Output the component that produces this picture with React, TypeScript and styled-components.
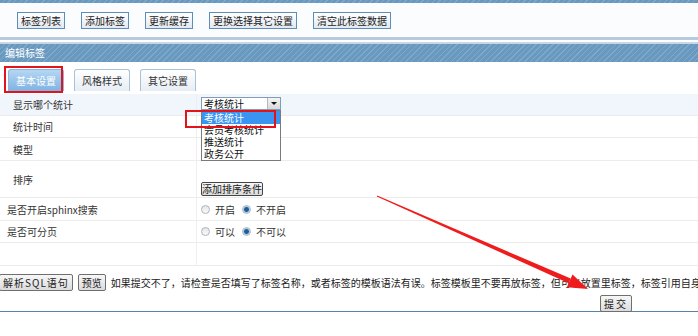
import styled, { createGlobalStyle } from 'styled-components';

const GlobalStyle = createGlobalStyle`
  html, body {
    margin: 0;
    padding: 0;
    background: #fff;
  }
  body {
    font-family: "Noto Sans CJK SC", "Liberation Sans", sans-serif;
    font-size: 10px;
    color: #333;
  }
`;

const stripes = `repeating-linear-gradient(135deg, #6a99c0 0px, #6a99c0 3px, #7ea9cc 3px, #7ea9cc 4px)`;

const Page = styled.div`
  position: relative;
  width: 698px;
  height: 336px;
  overflow: hidden;
  background: #fff;
`;

const TopStripe = styled.div`
  height: 3px;
  background: ${stripes};
`;

const Toolbar = styled.div`
  height: 34px;
  display: flex;
  align-items: flex-start;
  gap: 16px;
  padding: 9px 0 0 17px;
  box-sizing: border-box;
  background: #fafcfe;
`;

const ToolButton = styled.button`
  height: 17px;
  padding: 0 3px;
  border: 1px solid #5f8db8;
  background: linear-gradient(#ffffff, #e3e9f1);
  font-family: inherit;
  font-size: 10px;
  line-height: 15px;
  color: #222;
  cursor: pointer;
`;

const RuleTop = styled.div`
  height: 3px;
  background: #b6cade;
`;

const RuleGap = styled.div`
  height: 2px;
  background: #fff;
  border-bottom: 2px solid #c7d7e7;
`;

const SectionHeader = styled.div`
  height: 18px;
  line-height: 18px;
  padding-left: 5px;
  color: #fff;
  background: ${stripes};
`;

const TabBar = styled.div`
  position: relative;
  display: flex;
  gap: 10px;
  height: 32px;
  padding: 7px 0 0 8px;
  box-sizing: border-box;
`;

const Tab = styled.div<{ $active?: boolean }>`
  height: 22px;
  padding: 0 7px;
  line-height: 22px;
  border: 1px solid ${(p) => (p.$active ? '#8db6dc' : '#aac2d8')};
  border-bottom: none;
  border-radius: 3px 3px 0 0;
  box-sizing: border-box;
  color: ${(p) => (p.$active ? '#fff' : '#333')};
  background: ${(p) =>
    p.$active
      ? 'linear-gradient(#b5d6f3, #7fb3e2)'
      : 'linear-gradient(#ffffff, #e6edf4)'};
`;

const RedBox = styled.div<{ $x: number; $y: number; $w: number; $h: number }>`
  position: absolute;
  left: ${(p) => p.$x}px;
  top: ${(p) => p.$y}px;
  width: ${(p) => p.$w}px;
  height: ${(p) => p.$h}px;
  border: 2px solid #e3131b;
  box-sizing: border-box;
  pointer-events: none;
  z-index: 5;
`;

const Table = styled.div`
  display: grid;
  grid-template-columns: 197px 1fr;
`;

const Label = styled.div<{ $h: number; $indent: number; $hl?: boolean }>`
  height: ${(p) => p.$h}px;
  padding-left: ${(p) => p.$indent}px;
  display: flex;
  align-items: center;
  border-bottom: 1px solid #ececec;
  border-right: 1px solid #eeeeee;
  box-sizing: border-box;
  background: ${(p) => (p.$hl ? '#f0f6fb' : '#fff')};
`;

const Value = styled.div<{ $h: number; $hl?: boolean; $align?: string }>`
  position: relative;
  height: ${(p) => p.$h}px;
  padding-left: 4px;
  display: flex;
  align-items: ${(p) => p.$align || 'center'};
  gap: 5px;
  border-bottom: 1px solid #ececec;
  box-sizing: border-box;
  background: ${(p) => (p.$hl ? '#f0f6fb' : '#fff')};
`;

const SelectWrap = styled.div`
  position: relative;
  margin-top: 3px;
  width: 80px;
`;

const SelectBox = styled.div`
  height: 13px;
  border: 1px solid #7f9db9;
  background: #fff;
  box-sizing: border-box;
  display: flex;
  align-items: center;
  justify-content: space-between;
  padding-left: 2px;
  line-height: 11px;
  color: #111;
`;

const SelectArrow = styled.span`
  width: 12px;
  height: 11px;
  background: linear-gradient(#f4f4f4, #d8d8d8);
  border-left: 1px solid #b8b8b8;
  display: flex;
  align-items: center;
  justify-content: center;
  &::after {
    content: '';
    border-left: 3px solid transparent;
    border-right: 3px solid transparent;
    border-top: 3px solid #111;
  }
`;

const OptionList = styled.div`
  position: absolute;
  top: 13px;
  left: 0;
  width: 80px;
  border: 1px solid #7a7a7a;
  background: #fff;
  box-sizing: border-box;
  z-index: 4;
`;

const Option = styled.div<{ $sel?: boolean }>`
  height: ${(p) => (p.$sel ? 13 : 12)}px;
  line-height: ${(p) => (p.$sel ? 13 : 12)}px;
  padding-left: 2px;
  background: ${(p) => (p.$sel ? '#3a95f2' : '#fff')};
  color: ${(p) => (p.$sel ? '#fff' : '#111')};
  white-space: nowrap;
`;

const PlainButton = styled.button<{ $spacing?: number }>`
  height: 17px;
  padding: 0 3px;
  border: 1px solid #6f6f6f;
  border-radius: 2px;
  background: linear-gradient(#f7f7f7, #dcdcdc);
  font-family: inherit;
  font-size: 10px;
  line-height: 15px;
  color: #222;
  letter-spacing: ${(p) => p.$spacing || 0}px;
  white-space: nowrap;
`;

const SmallButton = styled(PlainButton)`
  height: 14px;
  padding: 0;
  line-height: 12px;
  margin-bottom: 1px;
  border-color: #444;
`;

const Radio = styled.span<{ $on?: boolean }>`
  width: 9px;
  height: 9px;
  border-radius: 50%;
  border: 1px solid #a9b4bf;
  box-sizing: border-box;
  background: ${(p) =>
    p.$on
      ? 'radial-gradient(circle, #1f5f99 0 2px, #6ea5d6 2.5px, #e8eef4 3.5px)'
      : 'linear-gradient(#e6e6e6, #fafafa)'};
`;

const RadioText = styled.span`
  margin-right: 2px;
`;

const Footer = styled.div`
  padding-top: 8px;
  height: 46px;
  box-sizing: border-box;
  border-bottom: 1px solid #5882aa;
`;

const FooterLine = styled.div`
  display: flex;
  align-items: center;
  gap: 5px;
  white-space: nowrap;
  overflow: hidden;
  margin-left: -1px;
`;

const Hint = styled.span`
  color: #222;
`;

const SubmitRow = styled.div`
  padding: 4px 0 0 600px;
`;

const Arrow = styled.svg`
  position: absolute;
  left: 0;
  top: 0;
  pointer-events: none;
  z-index: 6;
`;

const rows = [
  { label: '显示哪个统计', h: 22, indent: 13, hl: true },
  { label: '统计时间', h: 22, indent: 13 },
  { label: '模型', h: 23, indent: 13 },
  { label: '排序', h: 37, indent: 13 },
  { label: '是否开启sphinx搜索', h: 23, indent: 7 },
  { label: '是否可分页', h: 22, indent: 7 },
  { label: '', h: 23, indent: 7 },
];

export default function App() {
  const renderValue = (i: number) => {
    if (i === 0) {
      return (
        <SelectWrap>
          <SelectBox>
            考核统计
            <SelectArrow />
          </SelectBox>
          <OptionList>
            <Option $sel>考核统计</Option>
            <Option>会员考核统计</Option>
            <Option>推送统计</Option>
            <Option>政务公开</Option>
          </OptionList>
        </SelectWrap>
      );
    }
    if (i === 3) return <SmallButton>添加排序条件</SmallButton>;
    if (i === 4)
      return (
        <>
          <Radio />
          <RadioText>开启</RadioText>
          <Radio $on />
          <RadioText>不开启</RadioText>
        </>
      );
    if (i === 5)
      return (
        <>
          <Radio />
          <RadioText>可以</RadioText>
          <Radio $on />
          <RadioText>不可以</RadioText>
        </>
      );
    return null;
  };

  return (
    <Page>
      <GlobalStyle />
      <TopStripe />
      <Toolbar>
        <ToolButton>标签列表</ToolButton>
        <ToolButton>添加标签</ToolButton>
        <ToolButton>更新缓存</ToolButton>
        <ToolButton>更换选择其它设置</ToolButton>
        <ToolButton>清空此标签数据</ToolButton>
      </Toolbar>
      <RuleTop />
      <RuleGap />
      <SectionHeader>编辑标签</SectionHeader>
      <TabBar>
        <Tab $active>基本设置</Tab>
        <Tab>风格样式</Tab>
        <Tab>其它设置</Tab>
      </TabBar>
      <Table>
        {rows.map((r, i) => [
          <Label key={`l${i}`} $h={r.h} $indent={r.indent} $hl={r.hl}>
            {r.label}
          </Label>,
          <Value
            key={`v${i}`}
            $h={r.h}
            $hl={r.hl}
            $align={i === 0 ? 'flex-start' : i === 3 ? 'flex-end' : 'center'}
          >
            {renderValue(i)}
          </Value>,
        ])}
      </Table>
      <Footer>
        <FooterLine>
          <PlainButton $spacing={1}>解析SQL语句</PlainButton>
          <PlainButton>预览</PlainButton>
          <Hint>
            如果提交不了，请检查是否填写了标签名称，或者标签的模板语法有误。标签模板里不要再放标签，但可以放置里标签，标签引用自身会造
          </Hint>
        </FooterLine>
        <SubmitRow>
          <PlainButton $spacing={2}>提交</PlainButton>
        </SubmitRow>
      </Footer>
      <RedBox $x={4} $y={66} $w={59} $h={27} />
      <RedBox $x={185} $y={110} $w={91} $h={18} />
      <Arrow width={698} height={336} viewBox="0 0 698 336">
        <polygon points="376.8,196.5 377.2,195.5 570.7,278.6 568.7,283.2" fill="#ee1c1c" />
        <polygon points="588,289 566.9,287.3 572.5,274.5" fill="#ee1c1c" />
      </Arrow>
    </Page>
  );
}
